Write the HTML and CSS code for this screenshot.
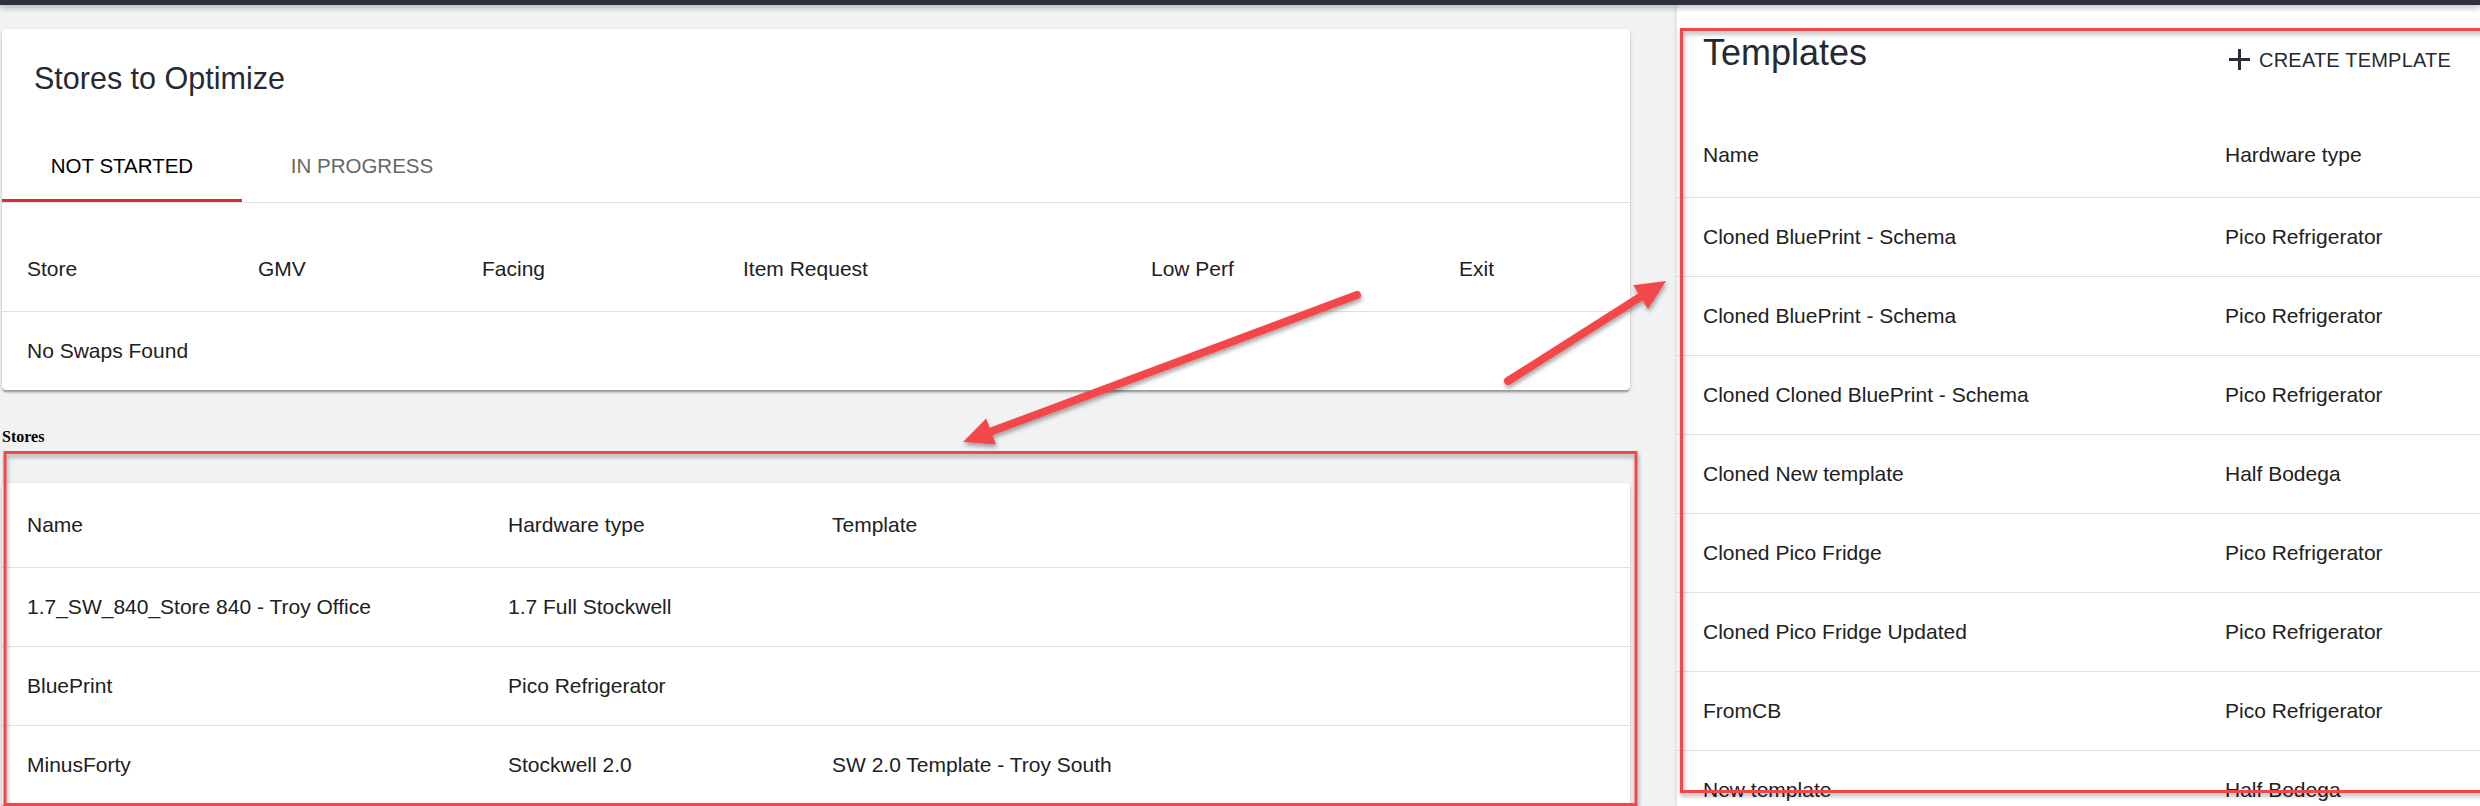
FILE: index.html
```html
<!DOCTYPE html>
<html lang="en">
<head>
    <meta charset="UTF-8">
    <meta name="viewport" content="width=device-width, initial-scale=1.0">
    <title>Stores to Optimize</title>
    <link rel="stylesheet" href="styles.css">
</head>
<body>
    <div class="topbar"></div>

    <div class="layout">
        <main class="main">
            <section class="card optimize">
                <h2 class="card-title">Stores to Optimize</h2>

                <div class="tabs">
                    <div class="tab active">NOT STARTED</div>
                    <div class="tab">IN PROGRESS</div>
                </div>

                <table class="data swaps">
                    <colgroup>
                        <col class="c1"><col class="c2"><col class="c3"><col class="c4"><col class="c5"><col>
                    </colgroup>
                    <thead>
                        <tr>
                            <th>Store</th>
                            <th>GMV</th>
                            <th>Facing</th>
                            <th>Item Request</th>
                            <th>Low Perf</th>
                            <th>Exit</th>
                        </tr>
                    </thead>
                    <tbody>
                        <tr class="last">
                            <td colspan="6">No Swaps Found</td>
                        </tr>
                    </tbody>
                </table>
            </section>

            <h4 class="section-label">Stores</h4>

            <section class="card stores">
                <table class="data">
                    <colgroup>
                        <col class="name"><col class="hw"><col>
                    </colgroup>
                    <thead>
                        <tr>
                            <th>Name</th>
                            <th>Hardware type</th>
                            <th>Template</th>
                        </tr>
                    </thead>
                    <tbody>
                        <tr>
                            <td>1.7_SW_840_Store 840 - Troy Office</td>
                            <td>1.7 Full Stockwell</td>
                            <td></td>
                        </tr>
                        <tr>
                            <td>BluePrint</td>
                            <td>Pico Refrigerator</td>
                            <td></td>
                        </tr>
                        <tr>
                            <td>MinusForty</td>
                            <td>Stockwell 2.0</td>
                            <td>SW 2.0 Template - Troy South</td>
                        </tr>
                    </tbody>
                </table>
            </section>
        </main>

        <aside class="drawer">
            <div class="drawer-head">
                <h2 class="drawer-title">Templates</h2>
                <button class="create-btn">
                    <svg width="21" height="21" viewBox="0 0 21 21"><path d="M10.5 0v21M0 10.5h21" stroke="#2b2e38" stroke-width="3"/></svg>
                    CREATE TEMPLATE
                </button>
            </div>

            <table class="data templates">
                <colgroup>
                    <col class="name"><col>
                </colgroup>
                <thead>
                    <tr>
                        <th>Name</th>
                        <th>Hardware type</th>
                    </tr>
                </thead>
                <tbody>
                    <tr><td>Cloned BluePrint - Schema</td><td>Pico Refrigerator</td></tr>
                    <tr><td>Cloned BluePrint - Schema</td><td>Pico Refrigerator</td></tr>
                    <tr><td>Cloned Cloned BluePrint - Schema</td><td>Pico Refrigerator</td></tr>
                    <tr><td>Cloned New template</td><td>Half Bodega</td></tr>
                    <tr><td>Cloned Pico Fridge</td><td>Pico Refrigerator</td></tr>
                    <tr><td>Cloned Pico Fridge Updated</td><td>Pico Refrigerator</td></tr>
                    <tr><td>FromCB</td><td>Pico Refrigerator</td></tr>
                    <tr><td>New template</td><td>Half Bodega</td></tr>
                </tbody>
            </table>
        </aside>
    </div>

    <!-- screenshot markup: boxes and arrows drawn over the page -->
    <svg class="annotations" width="2480" height="806" viewBox="0 0 2480 806">
        <defs>
            <filter id="shade" x="-5%" y="-5%" width="110%" height="110%">
                <feDropShadow dx="1" dy="3" stdDeviation="2" flood-color="#000" flood-opacity="0.35"/>
            </filter>
        </defs>
        <g filter="url(#shade)" fill="none" stroke="#f44648" stroke-width="3">
            <rect x="5" y="452.5" width="1631" height="352"/>
            <rect x="1681.5" y="29.5" width="981" height="762"/>
        </g>
        <g filter="url(#shade)">
            <line x1="1357" y1="295" x2="987" y2="433" stroke="#f44648" stroke-width="8" stroke-linecap="round"/>
            <polygon points="963,442 996,444.6 986.2,418.4" fill="#f44648"/>
            <line x1="1508" y1="381" x2="1645" y2="294" stroke="#f44648" stroke-width="8" stroke-linecap="round"/>
            <polygon points="1666,281 1648.1,308.9 1633.2,285.2" fill="#f44648"/>
        </g>
    </svg>
</body>
</html>
```

FILE: styles.css
```css
* {
    margin: 0;
    padding: 0;
    box-sizing: border-box;
}

html,
body {
    height: 806px;
    overflow: hidden;
}

body {
    position: relative;
    background: #f1f2f4;
    font-family: 'Liberation Sans', Arial, sans-serif;
    color: #212121;
}

.topbar {
    position: relative;
    z-index: 2;
    height: 5px;
    background: #2e313c;
    box-shadow: 0 2px 6px rgba(0, 0, 0, 0.35);
}

.layout {
    display: flex;
    height: 801px;
}

.main {
    width: 1677px;
    flex-shrink: 0;
    padding: 24px 47px 0 2px;
}

.card {
    background: #fff;
    border-radius: 4px;
    box-shadow: 0 3px 2px -1px rgba(0, 0, 0, 0.2),
                0 2px 2px rgba(0, 0, 0, 0.14),
                0 2px 5px rgba(0, 0, 0, 0.12);
}

.card-title {
    padding: 31px 32px 34px;
    font-size: 30.5px;
    line-height: 36px;
    font-weight: 400;
    color: #262932;
}

.tabs {
    display: flex;
    border-bottom: 1px solid #e0e0e0;
}

.tab {
    width: 240px;
    height: 72px;
    line-height: 72px;
    text-align: center;
    font-size: 20.5px;
    color: #666;
}

.tab.active {
    color: #000;
    box-shadow: inset 0 -3px 0 #d6302b;
}

/* tables */
.data {
    width: 100%;
    table-layout: fixed;
    border-collapse: collapse;
    font-size: 21px;
    line-height: 36px;
}

.data th,
.data td {
    text-align: left;
    font-weight: 400;
    padding: 21px 0 21px 25px;
    border-bottom: 1px solid #e0e0e0;
    white-space: nowrap;
}

.data th {
    padding-top: 24px;
    padding-bottom: 24px;
}

.swaps th {
    padding-top: 48px;
}

.swaps .last td {
    border-bottom: none;
}

.swaps .c1 { width: 231px; }
.swaps .c2 { width: 224px; }
.swaps .c3 { width: 261px; }
.swaps .c4 { width: 408px; }
.swaps .c5 { width: 308px; }

.section-label {
    margin: 38px 0 37px;
    font-family: 'Liberation Serif', 'Times New Roman', serif;
    font-size: 16px;
    line-height: 18px;
    font-weight: 700;
    color: #000;
}

.stores {
    border-radius: 4px 4px 0 0;
}

.stores .name { width: 481px; }
.stores .hw { width: 324px; }

/* templates drawer */
.drawer {
    flex: 1;
    background: #fff;
    box-shadow: 0 0 5px rgba(0, 0, 0, 0.14);
}

.drawer-head {
    display: flex;
    justify-content: space-between;
    align-items: flex-start;
    height: 108px;
    padding: 26.5px 29px 0 26px;
}

.drawer-title {
    font-size: 36px;
    line-height: 42px;
    font-weight: 400;
    color: #262932;
}

.create-btn {
    display: inline-flex;
    align-items: center;
    gap: 9px;
    margin-top: 7px;
    background: none;
    border: none;
    font-family: inherit;
    font-size: 20px;
    letter-spacing: 0.2px;
    line-height: 42px;
    color: #262932;
}

.templates th,
.templates td {
    padding-left: 26px;
}

.templates .name { width: 522px; }

.annotations {
    position: absolute;
    top: 0;
    left: 0;
    pointer-events: none;
}
```
